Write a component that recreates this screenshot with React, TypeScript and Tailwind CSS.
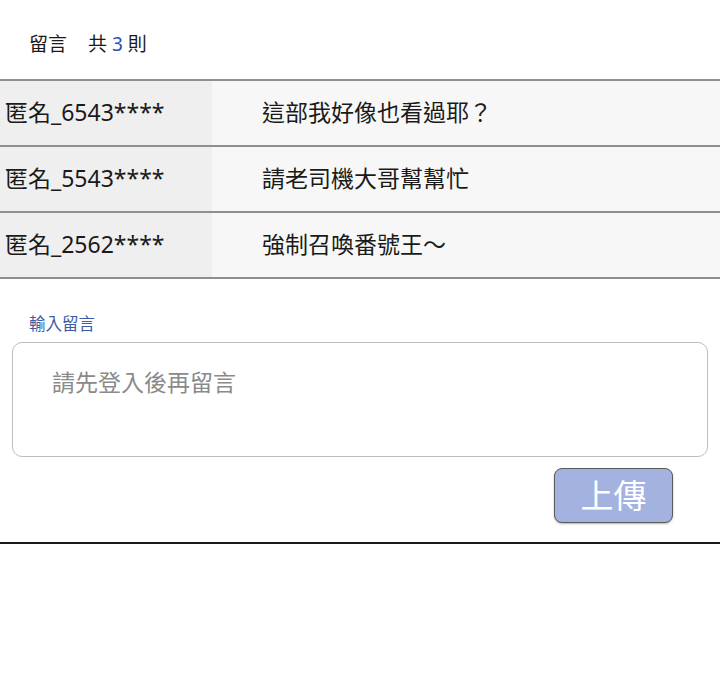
import { useState } from "react"

const comments = [
  { user: "匿名_6543****", text: "這部我好像也看過耶？" },
  { user: "匿名_5543****", text: "請老司機大哥幫幫忙" },
  { user: "匿名_2562****", text: "強制召喚番號王～" },
]

export default function App() {
  const [msg, setMsg] = useState("")

  return (
    <div
      className="w-[720px] bg-white text-[#1a1a1a]"
      style={{ fontFamily: '"Noto Sans", "Noto Sans CJK TC", sans-serif' }}
    >
      {/* header */}
      <div className="h-[79px] flex items-center pl-[29px] pt-[10px] text-[19px]">
        <span>留言</span>
        <span className="ml-[21px]">
          共 <span className="text-[#2b4fb8]">3</span> 則
        </span>
      </div>

      {/* list */}
      <div className="border-t-2 border-[#8f8f8f]">
        {comments.map((c) => (
          <div
            key={c.user}
            className="flex h-[66px] border-b-2 border-[#8f8f8f] shadow-[inset_0_-1px_0_#ffffff]"
          >
            <div className="w-[212px] bg-[#efefef] flex items-center pl-[5px] text-[23px] pb-[2px]">
              {c.user}
            </div>
            <div className="flex-1 bg-[#f7f7f7] flex items-center pl-[50px] text-[23px] pb-[2px]">
              {c.text}
            </div>
          </div>
        ))}
      </div>

      {/* input */}
      <div className="pt-[34px] border-b-2 border-[#1a1a1a]">
        <div className="pl-[29px] text-[16.5px] text-[#3b5ba5] leading-[22px]">輸入留言</div>
        <div className="px-[12px] mt-[7px]">
          <textarea
            value={msg}
            onChange={(e) => setMsg(e.target.value)}
            placeholder="請先登入後再留言"
            className="block w-full h-[115px] resize-none rounded-[10px] border border-[#bdbdbd] pl-[39px] pt-[22px] text-[23px] placeholder:text-[#8a8a8a] outline-none"
          />
        </div>
        <div className="flex justify-end pr-[47px] pt-[11px] pb-[19px]">
          <button className="w-[119px] h-[55px] rounded-[8px] border border-[#5a5a5a] bg-[#a3b2df] text-white text-[33px] leading-none shadow-[0_1px_2px_rgba(0,0,0,0.3)]">
            上傳
          </button>
        </div>
      </div>
    </div>
  )
}
